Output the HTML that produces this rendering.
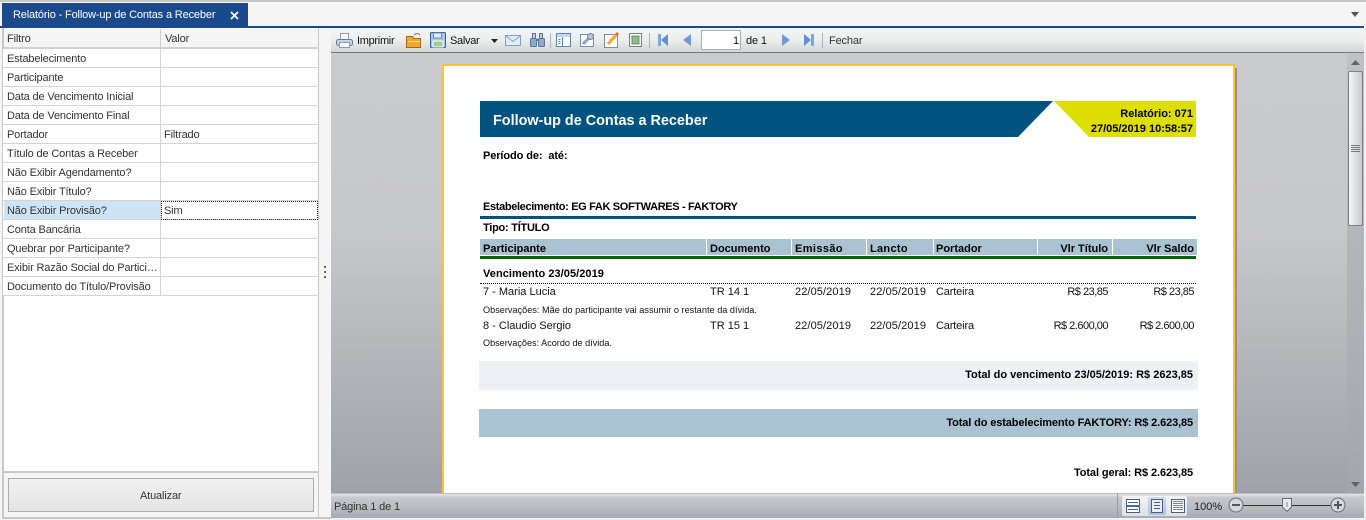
<!DOCTYPE html>
<html lang="pt"><head><meta charset="utf-8"><title>Relatório</title>
<style>
html,body{margin:0;padding:0;width:1366px;height:520px;overflow:hidden;background:#f5f5f5}
body{position:relative;font-family:"Liberation Sans",sans-serif;font-size:11px;letter-spacing:-.15px;color:#333}
.a,.t{position:absolute}
.t{white-space:nowrap;line-height:14px;margin-top:1px}
.b{font-weight:bold;color:#000;letter-spacing:-.1px}
.r{text-align:right}
.k{color:#111}
.m{letter-spacing:-.5px}
.row{position:absolute;left:3px;width:315px;height:18px;border-bottom:1px solid #d4d4d4;background:#fff}
.row span{position:absolute;left:4px;top:3px;line-height:14px;white-space:nowrap}
.row i{position:absolute;left:157px;top:0;width:1px;height:19px;background:#d4d4d4}
.row em{position:absolute;left:161px;top:3px;font-style:normal;line-height:14px}
.h{position:absolute;top:239px;height:16px;background:#a9c3d2}
svg{position:absolute;overflow:visible}
</style></head><body>

<div class="a" style="left:0;top:0;width:1366px;height:2px;background:#c8c8c8"></div>
<div class="a" style="left:2px;top:3px;width:246px;height:23px;background:#1a4a8c"></div>
<div class="t" style="left:13px;top:7px;color:#fff">Relatório - Follow-up de Contas a Receber</div>
<svg style="left:230px;top:11px" width="9" height="9"><path d="M1 1L8 8M8 1L1 8" stroke="#fff" stroke-width="1.8"/></svg>
<svg style="left:1351px;top:12px" width="8" height="5"><path d="M0 0H8L4 5Z" fill="#555"/></svg>
<div class="a" style="left:0;top:26px;width:1364px;height:2px;background:#1a4a8c"></div>

<!-- left panel -->
<div class="a" style="left:2px;top:28px;width:317px;height:489px;background:#fff"></div>
<div class="a" style="left:2px;top:28px;width:2px;height:489px;background:#c8c8c8"></div>
<div class="a" style="left:318px;top:28px;width:1px;height:489px;background:#c8c8c8"></div>
<div class="a" style="left:4px;top:29px;width:314px;height:18px;background:#f5f5f5;border-bottom:2px solid #d0d0d0"></div>
<div class="a" style="left:160px;top:29px;width:1px;height:18px;background:#d0d0d0"></div>
<div class="t" style="left:7px;top:31px">Filtro</div>
<div class="t" style="left:165px;top:31px">Valor</div>

<div class="row" style="top:49px"><span>Estabelecimento</span><i></i></div>
<div class="row" style="top:68px"><span>Participante</span><i></i></div>
<div class="row" style="top:87px"><span>Data de Vencimento Inicial</span><i></i></div>
<div class="row" style="top:106px"><span>Data de Vencimento Final</span><i></i></div>
<div class="row" style="top:125px"><span>Portador</span><i></i><em>Filtrado</em></div>
<div class="row" style="top:144px"><span>Título de Contas a Receber</span><i></i></div>
<div class="row" style="top:163px"><span>Não Exibir Agendamento?</span><i></i></div>
<div class="row" style="top:182px"><span>Não Exibir Título?</span><i></i></div>
<div class="row" style="top:201px"><div class="a" style="left:1px;top:0;width:156px;height:18px;background:#cde4f7"></div><span>Não Exibir Provisão?</span><i></i><div class="a" style="left:158px;top:0;width:155px;height:17px;border:1px dotted #222"></div><em>Sim</em></div>
<div class="row" style="top:220px"><span>Conta Bancária</span><i></i></div>
<div class="row" style="top:239px"><span>Quebrar por Participante?</span><i></i></div>
<div class="row" style="top:258px"><span>Exibir Razão Social do Partici…</span><i></i></div>
<div class="row" style="top:277px"><span>Documento do Título/Provisão</span><i></i></div>

<div class="a" style="left:4px;top:471px;width:314px;height:2px;background:#c8c8c8"></div>
<div class="a" style="left:4px;top:473px;width:314px;height:44px;background:#f5f5f5"></div>
<div class="a" style="left:8px;top:478px;width:304px;height:32px;border:1px solid #adadad;background:linear-gradient(#f1f1f1,#e4e4e4)"></div>
<div class="t" style="left:140px;top:488px">Atualizar</div>
<div class="a" style="left:2px;top:517px;width:329px;height:2px;background:#c8c8c8"></div>

<!-- splitter -->
<div class="a" style="left:324px;top:266px;width:2px;height:2px;background:#666"></div>
<div class="a" style="left:324px;top:271px;width:2px;height:2px;background:#666"></div>
<div class="a" style="left:324px;top:276px;width:2px;height:2px;background:#666"></div>

<!-- viewer -->
<div class="a" style="left:331px;top:53px;width:1035px;height:440px;background:linear-gradient(#c9cacc 0%,#c7c8ca 40%,#9fa2a9 100%)"></div>

<!-- toolbar -->
<div class="a" style="left:331px;top:28px;width:1033px;height:24px;background:linear-gradient(#f4f5f5,#eceded 50%,#d4d5d5);border-bottom:1px solid #77787a"></div>
<svg style="left:336px;top:32px" width="17" height="17"><rect x="4.500" y="1.500" width="8" height="6" fill="#fff" stroke="#8a9ab0"/><rect x=".5" y="7.500" width="16" height="6" rx="2" fill="#c9d3df" stroke="#66788f"/><rect x="3.500" y="10.500" width="10" height="5" fill="#fff" stroke="#8a9ab0"/></svg>
<div class="t k" style="left:357px;top:33px;letter-spacing:-.3px">Imprimir</div>
<svg style="left:406px;top:32px" width="16" height="16"><path d="M.5 4.500H6.500L8 6.500H14.500V15.500H.5Z" fill="#eda92f" stroke="#a9680f"/><path d="M2 9.500H14" stroke="#fbe0a0"/><path d="M8 3Q11 0 14 3" fill="none" stroke="#777"/></svg>
<svg style="left:430px;top:32px" width="16" height="16"><rect x=".5" y=".5" width="15" height="15" rx="1" fill="#a8c4e8" stroke="#34619e"/><rect x="3.500" y="1" width="8" height="5" fill="#e4ecf5" stroke="#6d8db8"/><rect x="3" y="9" width="10" height="6" fill="#9fd08a" stroke="#fff"/></svg>
<div class="t k" style="left:450px;top:33px;letter-spacing:-.3px">Salvar</div>
<svg style="left:491px;top:39px" width="7" height="4"><path d="M0 0H7L3.500 4Z" fill="#222"/></svg>
<svg style="left:505px;top:35px" width="16" height="11"><rect x=".5" y=".5" width="15" height="10" fill="#e3edf8" stroke="#7ba1d0"/><path d="M1 1L8 6.500L15 1" fill="none" stroke="#7ba1d0"/></svg>
<svg style="left:530px;top:32px" width="15" height="15"><rect x=".5" y="6.500" width="6" height="8" rx="1" fill="#8fa9c9" stroke="#5a7697"/><rect x="8.500" y="6.500" width="6" height="8" rx="1" fill="#8fa9c9" stroke="#5a7697"/><rect x="2.500" y="1.500" width="3" height="5" fill="#c0cfe0" stroke="#5a7697"/><rect x="9.500" y="1.500" width="3" height="5" fill="#c0cfe0" stroke="#5a7697"/><path d="M6.500 8H8.500" stroke="#5a7697" stroke-width="2"/></svg>
<div class="a" style="left:550px;top:33px;width:1px;height:15px;background:#a9b4c0"></div>
<svg style="left:556px;top:33px" width="15" height="14"><rect x=".5" y=".5" width="14" height="13" fill="#fff" stroke="#5c86b8"/><rect x="1" y="1" width="13" height="3" fill="#c2d6ec"/><path d="M6.500 4V13" stroke="#5c86b8"/><path d="M2.500 6.500H4.500M2.500 8.500H4.500M2.500 10.500H4.500" stroke="#6d7f96"/></svg>
<svg style="left:580px;top:32px" width="15" height="15"><rect x=".5" y="2.500" width="13" height="12" fill="#fff" stroke="#7a8ea8"/><path d="M3 12L9 6" stroke="#8aa5c8" stroke-width="3"/><circle cx="10.500" cy="4.500" r="3" fill="#b4c6dc" stroke="#6f88a8"/></svg>
<svg style="left:604px;top:32px" width="16" height="16"><rect x=".5" y="2.500" width="13" height="13" fill="#fff" stroke="#7a8ea8"/><path d="M4 12L12 3" stroke="#f0b23c" stroke-width="3.500"/><path d="M12 3L14 1" stroke="#d86f3c" stroke-width="3"/></svg>
<svg style="left:629px;top:33px" width="13" height="14"><rect x=".5" y=".5" width="12" height="13" fill="#fff" stroke="#6f7f92"/><rect x="3" y="3" width="7" height="8" fill="#8fbd8a" stroke="#6a8d6a"/></svg>
<div class="a" style="left:649px;top:33px;width:1px;height:15px;background:#a9b4c0"></div>
<svg style="left:658px;top:34px" width="10" height="12"><path d="M0 0H3V12H0Z" fill="#7ea6dc"/><path d="M10 0V12L3 6Z" fill="#5f90d4"/></svg>
<svg style="left:683px;top:34px" width="8" height="12"><path d="M8 0V12L0 6Z" fill="#6f9ad8"/></svg>
<div class="a" style="left:701px;top:30px;width:38px;height:18px;background:#fff;border:1px solid #abadb3"></div>
<div class="t k r" style="left:701px;top:33px;width:38px">1</div>
<div class="t k" style="left:746px;top:33px">de 1</div>
<svg style="left:782px;top:34px" width="8" height="12"><path d="M0 0V12L8 6Z" fill="#6f9ad8"/></svg>
<svg style="left:804px;top:34px" width="10" height="12"><path d="M0 0V12L7 6Z" fill="#5f90d4"/><path d="M7 0H10V12H7Z" fill="#7ea6dc"/></svg>
<div class="a" style="left:822px;top:33px;width:1px;height:15px;background:#a9b4c0"></div>
<div class="t" style="left:829px;top:33px">Fechar</div>

<!-- page -->
<div class="a" style="left:444px;top:68px;width:793px;height:425px;background:#8f9296"></div>
<div class="a" style="left:442px;top:64px;width:793px;height:429px;background:#fdc13a"></div>
<div class="a" style="left:444px;top:66px;width:789px;height:427px;background:#fff"></div>

<svg style="left:480px;top:101px" width="716" height="36"><path d="M0 0H573L538 36H0Z" fill="#00527f"/><path d="M574 0H716V36H609Z" fill="#dede00"/></svg>
<div class="t b" style="left:493px;top:112px;color:#fff;font-size:14.400px;line-height:16px;letter-spacing:0">Follow-up de Contas a Receber</div>
<div class="t b r" style="left:1000px;top:106px;width:193px;letter-spacing:0">Relatório: 071</div>
<div class="t b r" style="left:1000px;top:121px;width:193px;letter-spacing:0">27/05/2019 10:58:57</div>

<div class="t b" style="left:483px;top:148px">Período de:&nbsp; até:</div>
<div class="t b" style="left:483px;top:199px;letter-spacing:-.35px">Estabelecimento: EG FAK SOFTWARES - FAKTORY</div>
<div class="a" style="left:480px;top:216px;width:716px;height:3px;background:#00527f"></div>
<div class="t b" style="left:483px;top:220px;letter-spacing:-.25px">Tipo: TÍTULO</div>

<div class="h" style="left:480px;width:226px"></div>
<div class="h" style="left:707px;width:84px"></div>
<div class="h" style="left:792px;width:74px"></div>
<div class="h" style="left:867px;width:66px"></div>
<div class="h" style="left:934px;width:103px"></div>
<div class="h" style="left:1038px;width:74px"></div>
<div class="h" style="left:1113px;width:84px"></div>
<div class="t b" style="left:483px;top:241px;letter-spacing:0">Participante</div>
<div class="t b" style="left:710px;top:241px;letter-spacing:0">Documento</div>
<div class="t b" style="left:795px;top:241px;letter-spacing:.4px">Emissão</div>
<div class="t b" style="left:870px;top:241px;letter-spacing:.3px">Lancto</div>
<div class="t b" style="left:936px;top:241px;letter-spacing:0">Portador</div>
<div class="t b r" style="left:1038px;top:241px;width:70px;letter-spacing:0">Vlr Título</div>
<div class="t b r" style="left:1113px;top:241px;width:81px;letter-spacing:0">Vlr Saldo</div>
<div class="a" style="left:480px;top:256px;width:716px;height:3px;background:#006400"></div>

<div class="t b" style="left:483px;top:266px;letter-spacing:.05px">Vencimento 23/05/2019</div>
<div class="a" style="left:480px;top:283px;width:716px;height:0;border-top:1px dotted #111"></div>

<div class="t k" style="left:483px;top:284px;letter-spacing:0">7 - Maria Lucia</div>
<div class="t k" style="left:710px;top:284px;letter-spacing:0">TR 14 1</div>
<div class="t k" style="left:795px;top:284px;letter-spacing:.1px">22/05/2019</div>
<div class="t k" style="left:870px;top:284px;letter-spacing:.1px">22/05/2019</div>
<div class="t k" style="left:936px;top:284px">Carteira</div>
<div class="t k r m" style="left:1008px;top:284px;width:100px">R$ 23,85</div>
<div class="t k r m" style="left:1094px;top:284px;width:100px">R$ 23,85</div>
<div class="t k" style="left:483px;top:302px;font-size:9.100px;letter-spacing:.03px">Observações: Mãe do participante vai assumir o restante da dívida.</div>

<div class="t k" style="left:483px;top:318px;letter-spacing:0">8 - Claudio Sergio</div>
<div class="t k" style="left:710px;top:318px;letter-spacing:0">TR 15 1</div>
<div class="t k" style="left:795px;top:318px;letter-spacing:.1px">22/05/2019</div>
<div class="t k" style="left:870px;top:318px;letter-spacing:.1px">22/05/2019</div>
<div class="t k" style="left:936px;top:318px">Carteira</div>
<div class="t k r m" style="left:1008px;top:318px;width:100px">R$ 2.600,00</div>
<div class="t k r m" style="left:1094px;top:318px;width:100px">R$ 2.600,00</div>
<div class="t k" style="left:483px;top:335px;font-size:9.100px;letter-spacing:0">Observações: Acordo de dívida.</div>

<div class="a" style="left:479px;top:361px;width:719px;height:29px;background:#edf1f5"></div>
<div class="t b r" style="left:800px;top:367px;width:393px;letter-spacing:0">Total do vencimento 23/05/2019: R$ 2623,85</div>
<div class="a" style="left:479px;top:409px;width:719px;height:28px;background:#a9c3d2"></div>
<div class="t b r" style="left:800px;top:415px;width:393px;letter-spacing:-.12px">Total do estabelecimento FAKTORY: R$ 2.623,85</div>
<div class="t b r" style="left:800px;top:465px;width:393px;letter-spacing:-.1px">Total geral: R$ 2.623,85</div>

<!-- scrollbar -->
<div class="a" style="left:1347px;top:53px;width:17px;height:440px;background:linear-gradient(#bfc1c5,#a3a6ad)"></div>
<svg style="left:1351px;top:60px" width="9" height="5"><path d="M4.500 0L9 5H0Z" fill="#5f6368"/></svg>
<div class="a" style="left:1348px;top:71px;width:13px;height:153px;border:1px solid #7d7f83;border-radius:2px;background:linear-gradient(90deg,#f6f6f6,#dcdde0 60%,#c9cacd)"></div>
<div class="a" style="left:1351px;top:145px;width:9px;height:7px;background:repeating-linear-gradient(#777 0,#777 1px,transparent 1px,transparent 2px)"></div>
<svg style="left:1351px;top:482px" width="9" height="5"><path d="M0 0H9L4.500 5Z" fill="#5f6368"/></svg>
<div class="a" style="left:1364px;top:28px;width:2px;height:490px;background:#f0f0f0"></div>

<!-- status bar -->
<div class="a" style="left:331px;top:493px;width:1033px;height:25px;background:linear-gradient(#e6e7ea 0,#c6c8ce 15%,#bcbec4 50%,#a9abb2 100%);border-top:1px solid #b9bbc0;box-sizing:border-box"></div>
<div class="t" style="left:334px;top:499px">Página 1 de 1</div>
<div class="a" style="left:1117px;top:493px;width:1px;height:25px;background:#9a9ca2"></div>
<div class="a" style="left:1122px;top:496px;width:65px;height:20px;border-radius:2px;background:linear-gradient(#f2f3f5,#dfe1e5)"></div>
<div class="a" style="left:1148px;top:497px;width:18px;height:18px;border-radius:2px;background:linear-gradient(#cdddf0,#a9c2e2)"></div>
<svg style="left:1126px;top:499px" width="14" height="14"><rect x=".5" y=".5" width="13" height="13" fill="#fff" stroke="#4b5f78"/><path d="M2 3.500H12M2 10.500H12" stroke="#4b5f78"/><path d="M1 7H13" stroke="#2f6fc4" stroke-width="2"/></svg>
<svg style="left:1151px;top:499px" width="12" height="14"><rect x=".5" y=".5" width="11" height="13" fill="#e4edf8" stroke="#4b5f78"/><path d="M3 3.500H9M3 6.500H9M3 9.500H9" stroke="#4b5f78"/></svg>
<svg style="left:1171px;top:499px" width="14" height="14"><rect x=".5" y=".5" width="13" height="13" fill="#fff" stroke="#4b5f78"/><path d="M2 2.500H12M2 4.500H12M2 6.500H12M2 8.500H12M2 10.500H12" stroke="#4b5f78" stroke-width=".8"/></svg>
<div class="t" style="left:1194px;top:499px;color:#222;letter-spacing:0">100%</div>
<div class="a" style="left:1236px;top:505px;width:103px;height:1px;background:#333"></div>
<svg style="left:1228px;top:497px" width="16" height="16"><circle cx="8" cy="8" r="7" fill="#d5d7db" stroke="#6a6d73"/><path d="M4 8H12" stroke="#555" stroke-width="2"/></svg>
<svg style="left:1330px;top:497px" width="16" height="16"><circle cx="8" cy="8" r="7" fill="#d5d7db" stroke="#6a6d73"/><path d="M4 8H12M8 4V12" stroke="#555" stroke-width="2"/></svg>
<svg style="left:1282px;top:498px" width="10" height="14"><path d="M.5 .5H9.500V9L5 13.500L.5 9Z" fill="#e8e9ec" stroke="#6a6d73"/><path d="M5 4V9" stroke="#888"/></svg>
<div class="a" style="left:331px;top:518px;width:1035px;height:2px;background:#f0f0f0"></div>
</body></html>
